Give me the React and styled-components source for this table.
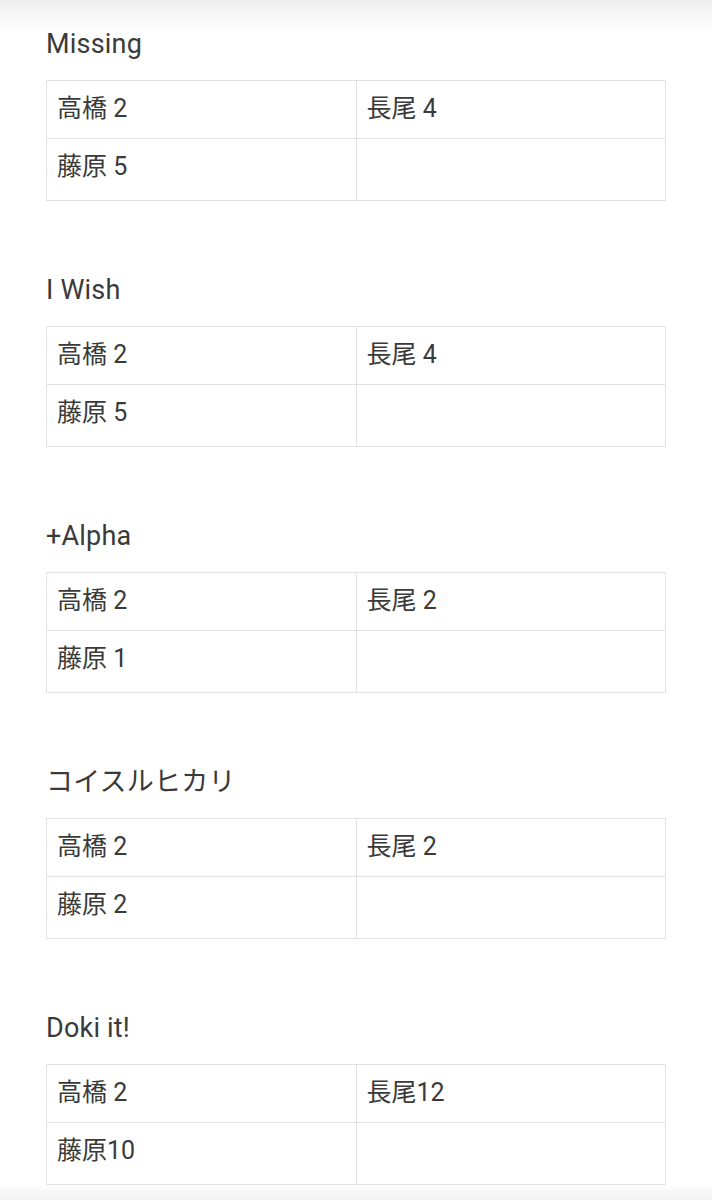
import React from "react";
import styled, { createGlobalStyle } from "styled-components";

const GlobalStyle = createGlobalStyle`
  html, body {
    margin: 0;
    padding: 0;
    background: #fff;
  }
  body {
    font-family: Roboto, "Noto Sans CJK JP", sans-serif;
    color: #3a3a3a;
  }
`;

const Page = styled.div`
  position: relative;
  width: 712px;
  height: 1200px;
  overflow: hidden;
  background: #fff;
`;

const TopShade = styled.div`
  position: absolute;
  top: 0;
  left: 0;
  right: 0;
  height: 34px;
  background: linear-gradient(to bottom, rgba(232, 232, 232, 0.7), rgba(255, 255, 255, 0));
  pointer-events: none;
`;

const BottomShade = styled.div`
  position: absolute;
  bottom: 0;
  left: 0;
  right: 0;
  height: 14px;
  background: linear-gradient(to bottom, rgba(248, 248, 248, 0.5), rgba(243, 243, 243, 1));
  pointer-events: none;
`;

const Content = styled.div`
  padding: 26px 0 0 46px;
`;

const Section = styled.section`
  margin-bottom: 71px;
`;

const Title = styled.h2`
  margin: 0 0 18px;
  font-size: 27px;
  font-weight: 400;
  line-height: 36px;
  letter-spacing: 0.2px;
  color: #3a3a3a;
`;

const Table = styled.table`
  width: 620px;
  border-collapse: collapse;
  table-layout: fixed;
`;

const Tr = styled.tr`
  height: ${(p) => p.h}px;
`;

const Td = styled.td`
  border: 1px solid #e2e2e2;
  padding: 10px 10px 0;
  vertical-align: top;
  font-size: 25px;
  line-height: 36px;
  color: #3a3a3a;
`;

const sections = [
  { title: "Missing", a: "高橋 2", b: "長尾 4", c: "藤原 5" },
  { title: "I Wish", a: "高橋 2", b: "長尾 4", c: "藤原 5" },
  { title: "+Alpha", a: "高橋 2", b: "長尾 2", c: "藤原 1" },
  { title: "コイスルヒカリ", a: "高橋 2", b: "長尾 2", c: "藤原 2" },
  { title: "Doki it!", a: "高橋 2", b: "長尾12", c: "藤原10" },
];

const App = () => {
  return (
    <Page>
      <GlobalStyle />
      <TopShade />
      <Content>
        {sections.map((s, i) => (
          <Section key={i}>
            <Title>{s.title}</Title>
            <Table>
              <tbody>
                <Tr h={58}>
                  <Td>{s.a}</Td>
                  <Td>{s.b}</Td>
                </Tr>
                <Tr h={62}>
                  <Td>{s.c}</Td>
                  <Td></Td>
                </Tr>
              </tbody>
            </Table>
          </Section>
        ))}
      </Content>
      <BottomShade />
    </Page>
  );
};

export default App;
